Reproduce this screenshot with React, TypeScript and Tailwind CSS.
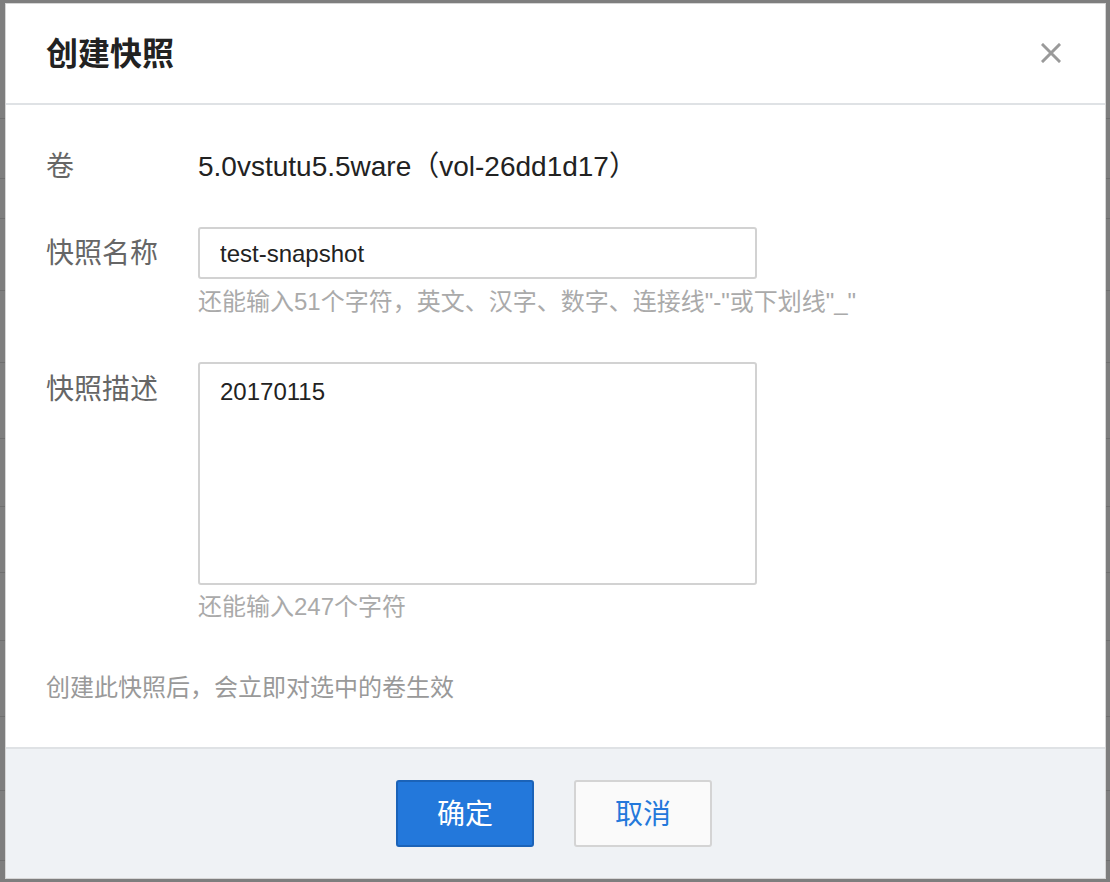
import React from "react";

const font = "font-['Liberation_Sans','Noto_Sans_CJK_SC',sans-serif]";

function BgRows() {
  const ys = [118, 178, 218, 290, 362, 438, 506, 572, 640, 716, 790, 860];
  return (
    <div className="absolute inset-0 pointer-events-none">
      {ys.map((y) => (
        <div key={y} className="absolute left-0 right-0 h-px bg-[#6f6f6f]" style={{ top: y }} />
      ))}
    </div>
  );
}

export default function App() {
  return (
    <div className={`relative w-[1110px] h-[882px] bg-[#7e7e7e] pt-[3px] pl-[5px] pr-[4px] pb-[3px] ${font}`}>
      <BgRows />
      <div className="relative flex h-full flex-col bg-white border border-[#d6d6d6]">
        {/* header */}
        <div className="flex h-[101px] shrink-0 items-center justify-between border-b-2 border-[#dfe2e5] pl-[40px] pr-[44px]">
          <div className="text-[32px] leading-[40px] font-bold text-[#222]">创建快照</div>
          <svg width="20" height="20" viewBox="0 0 20 20" className="mt-[-2px]">
            <path d="M2 2 L18 18 M18 2 L2 18" stroke="#9a9a9a" strokeWidth="3" strokeLinecap="square" />
          </svg>
        </div>

        {/* body */}
        <div className="flex-1 pl-[40px] pt-[42px]">
          <div className="flex">
            <div className="w-[152px] text-[28px] leading-[40px] text-[#666]">卷</div>
            <div className="text-[28px] leading-[40px] text-[#222]">5.0vstutu5.5ware（vol-26dd1d17）</div>
          </div>

          <div className="mt-[40px] flex">
            <div className="w-[152px] pt-[7px] text-[28px] leading-[40px] text-[#666]">快照名称</div>
            <div className="flex flex-col">
              <input
                readOnly
                defaultValue="test-snapshot"
                className="h-[52px] w-[559px] rounded-[3px] border-2 border-[#d2d2d2] px-[20px] pt-[2px] text-[24px] text-[#222] outline-none"
              />
              <div className="mt-[7px] text-[24px] leading-[32px] text-[#aaa]">
                还能输入51个字符，英文、汉字、数字、连接线"-"或下划线"_"
              </div>
            </div>
          </div>

          <div className="mt-[44px] flex">
            <div className="w-[152px] pt-[8px] text-[28px] leading-[40px] text-[#666]">快照描述</div>
            <div className="flex flex-col">
              <textarea
                readOnly
                defaultValue="20170115"
                className="h-[223px] w-[559px] resize-none rounded-[3px] border-2 border-[#d2d2d2] px-[20px] pt-[12px] text-[24px] leading-[32px] text-[#222] outline-none"
              />
              <div className="mt-[6px] text-[24px] leading-[32px] text-[#aaa]">还能输入247个字符</div>
            </div>
          </div>

          <div className="mt-[49px] text-[24px] leading-[32px] text-[#999]">创建此快照后，会立即对选中的卷生效</div>
        </div>

        {/* footer */}
        <div className="flex h-[131px] shrink-0 justify-center gap-[40px] border-t-2 border-[#dfe2e5] bg-[#eff2f5] pt-[31px] pr-[3px]">
          <button className="h-[67px] w-[138px] rounded-[3px] border-2 border-[#1b63b8] bg-[#2378db] pt-[3px] text-[28px] text-white">
            确定
          </button>
          <button className="h-[67px] w-[138px] rounded-[3px] border-2 border-[#d4d4d4] bg-[#fafafa] pt-[3px] text-[28px] text-[#2378db]">
            取消
          </button>
        </div>
      </div>
    </div>
  );
}
